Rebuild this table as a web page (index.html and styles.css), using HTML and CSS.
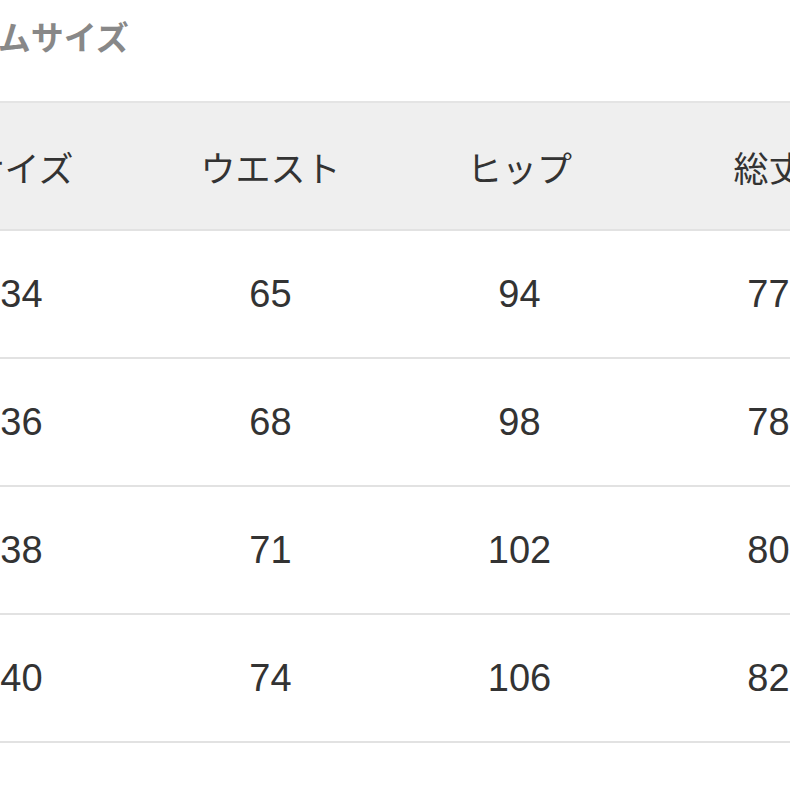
FILE: index.html
```html
<!DOCTYPE html>
<html lang="ja">
<head>
<meta charset="utf-8">
<title>アイテムサイズ</title>
<link rel="stylesheet" href="styles.css">
</head>
<body>
<div class="page">
  <h2 class="title">アイテムサイズ</h2>
  <div class="table">
    <div class="row head">
      <div class="cell">サイズ</div>
      <div class="cell">ウエスト</div>
      <div class="cell">ヒップ</div>
      <div class="cell">総丈</div>
    </div>
    <div class="row">
      <div class="cell">34</div>
      <div class="cell">65</div>
      <div class="cell">94</div>
      <div class="cell">77</div>
    </div>
    <div class="row">
      <div class="cell">36</div>
      <div class="cell">68</div>
      <div class="cell">98</div>
      <div class="cell">78</div>
    </div>
    <div class="row">
      <div class="cell">38</div>
      <div class="cell">71</div>
      <div class="cell">102</div>
      <div class="cell">80</div>
    </div>
    <div class="row">
      <div class="cell">40</div>
      <div class="cell">74</div>
      <div class="cell">106</div>
      <div class="cell">82</div>
    </div>
  </div>
</div>
</body>
</html>
```
FILE: styles.css
```css
html, body {
  margin: 0;
  padding: 0;
  background: #ffffff;
  overflow: hidden;
}
body {
  font-family: "Liberation Sans", "Noto Sans CJK JP", sans-serif;
  color: #333333;
}
.page {
  margin-left: -103px;
  width: 1000px;
}
.title {
  margin: 16px 0 45px 5px;
  font-family: "Noto Sans CJK JP", sans-serif;
  font-size: 33px;
  line-height: 40px;
  font-weight: 700;
  color: #888888;
}
.table {
  border-top: 2px solid #e4e4e4;
}
.row {
  display: grid;
  grid-template-columns: repeat(4, 249px);
  height: 126px;
  border-bottom: 2px solid #e2e2e2;
}
.row.head {
  background: #efefef;
}
.cell {
  display: flex;
  align-items: center;
  justify-content: center;
  font-size: 38px;
}
.head .cell {
  font-family: "Noto Sans CJK JP", sans-serif;
  font-size: 35px;
  color: #333333;
}
```
